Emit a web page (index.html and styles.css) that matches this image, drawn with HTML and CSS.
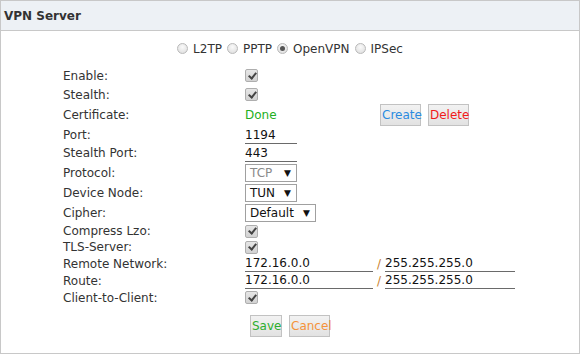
FILE: index.html
```html
<!DOCTYPE html>
<html>
<head>
<meta charset="utf-8">
<link rel="stylesheet" href="styles.css">
</head>
<body>
<div class="panel">
  <div class="panel-head">VPN Server</div>
  <div class="panel-body">
    <div class="modes">
      <span class="radio"></span><span class="mode-label">L2TP</span>
      <span class="radio"></span><span class="mode-label">PPTP</span>
      <span class="radio on"></span><span class="mode-label">OpenVPN</span>
      <span class="radio"></span><span class="mode-label">IPSec</span>
    </div>
    <div class="form">
      <div class="row h19"><span class="label">Enable:</span><span class="check"></span></div>
      <div class="row h19"><span class="label">Stealth:</span><span class="check"></span></div>
      <div class="row h22"><span class="label">Certificate:</span><span class="done">Done</span><span class="btn blue">Create</span><span class="btn red">Delete</span></div>
      <div class="row h18"><span class="label">Port:</span><span class="input w52">1194</span></div>
      <div class="row h18"><span class="label">Stealth Port:</span><span class="input w52">443</span></div>
      <div class="row h21"><span class="label">Protocol:</span><span class="select w52 disabled">TCP<span class="arrow">▼</span></span></div>
      <div class="row h20"><span class="label">Device Node:</span><span class="select w52">TUN<span class="arrow">▼</span></span></div>
      <div class="row h20"><span class="label">Cipher:</span><span class="select w71">Default<span class="arrow">▼</span></span></div>
      <div class="row h16"><span class="label">Compress Lzo:</span><span class="check"></span></div>
      <div class="row h16"><span class="label">TLS-Server:</span><span class="check"></span></div>
      <div class="row h17"><span class="label">Remote Network:</span><span class="input w128">172.16.0.0</span><span class="slash">/</span><span class="input w130">255.255.255.0</span></div>
      <div class="row h17"><span class="label">Route:</span><span class="input w128">172.16.0.0</span><span class="slash">/</span><span class="input w130">255.255.255.0</span></div>
      <div class="row h17"><span class="label">Client-to-Client:</span><span class="check"></span></div>
    </div>
    <div class="actions">
      <span class="btn green">Save</span><span class="btn orange">Cancel</span>
    </div>
  </div>
</div>
</body>
</html>
```
FILE: styles.css
```css
html, body {
  margin: 0;
  padding: 0;
  background: #fff;
}
body {
  font-family: "DejaVu Sans", Verdana, sans-serif;
  font-size: 12px;
  color: #333;
}
.panel {
  width: 580px;
  height: 354px;
  box-sizing: border-box;
  border: 1px solid #c8c8c8;
}
.panel-head {
  height: 30px;
  box-sizing: border-box;
  background: #edf1f5;
  border-bottom: 1px solid #c8c8c8;
  font-weight: bold;
  line-height: 30px;
  padding-left: 3px;
  color: #333;
}
.modes {
  display: flex;
  justify-content: center;
  align-items: center;
  height: 35px;
}
.radio {
  width: 11px;
  height: 11px;
  box-sizing: border-box;
  border-radius: 50%;
  border: 1px solid #b9b9b9;
  background: radial-gradient(circle at 50% 35%, #fafafa 0%, #e4e4e4 70%, #d6d6d6 100%);
  margin: 0 5px 0 5px;
  position: relative;
}
.radio:first-child { margin-left: 0; }
.radio.on::after {
  content: "";
  position: absolute;
  left: 2px;
  top: 2px;
  width: 5px;
  height: 5px;
  border-radius: 50%;
  background: #555;
}
.mode-label {
  color: #333;
}
.form {
  padding-left: 62px;
}
.row {
  display: flex;
  align-items: center;
}
.h16 { height: 16px; }
.h17 { height: 17px; }
.h18 { height: 18px; }
.h19 { height: 19px; }
.h20 { height: 20px; }
.h21 { height: 21px; }
.h22 { height: 22px; }
.label {
  width: 182px;
  flex: none;
}
.check {
  width: 13px;
  height: 13px;
  box-sizing: border-box;
  border: 1px solid #aeaeae;
  border-radius: 2px;
  background: linear-gradient(#e6e6e6, #d2d2d2);
  position: relative;
}
.check::after {
  content: "";
  position: absolute;
  left: 3.5px;
  top: 0.5px;
  width: 3px;
  height: 6px;
  border-right: 2px solid #444;
  border-bottom: 2px solid #444;
  transform: rotate(40deg);
}
.done {
  color: #22b022;
  width: 135px;
}
.btn {
  display: inline-block;
  height: 22px;
  line-height: 20px;
  box-sizing: border-box;
  border: 1px solid #c2c2c2;
  background: linear-gradient(#f2f2f2, #e2e2e2);
  padding: 0 1px;
  text-align: center;
}
.btn + .btn { margin-left: 7px; }
.blue { color: #2b8be0; width: 41px; }
.red { color: #f01a1a; width: 41px; }
.green { color: #2eae2e; width: 32px; }
.orange { color: #f5933a; width: 41px; }
.input {
  box-sizing: border-box;
  border-bottom: 1px solid #6a6a6a;
  height: 17px;
  line-height: 17px;
  color: #111;
  padding-left: 0;
}
.w52 { width: 52px; }
.w71 { width: 71px; }
.w128 { width: 128px; }
.w130 { width: 130px; }
.slash {
  color: #c9822e;
  width: 12px;
  text-align: center;
}
.select {
  box-sizing: border-box;
  height: 18px;
  border: 1px solid #a0a0a0;
  padding-left: 4px;
  line-height: 16px;
  color: #111;
  position: relative;
  display: inline-block;
}
.select.disabled { color: #8a8a8a; }
.arrow {
  position: absolute;
  right: 5px;
  top: 0;
  font-size: 9px;
  color: #111;
}
.actions {
  display: flex;
  justify-content: center;
  padding-top: 9px;
}
```
